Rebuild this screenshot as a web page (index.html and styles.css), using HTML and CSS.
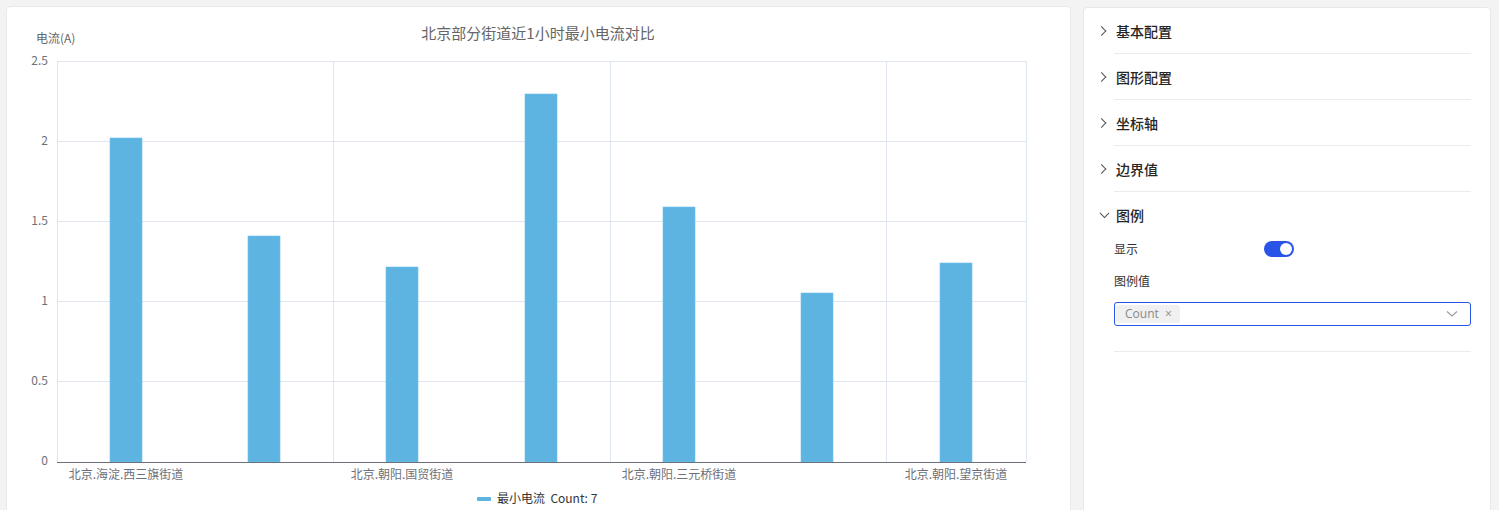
FILE: index.html
```html
<!DOCTYPE html>
<html lang="zh">
<head>
<meta charset="utf-8">
<link rel="stylesheet" href="styles.css">
</head>
<body>
<div class="page">
  <div class="card chart-card">
    <svg class="chart" width="1063" height="510" viewBox="0 0 1063 510" xmlns="http://www.w3.org/2000/svg">
      <text class="title" x="531" y="32" text-anchor="middle">北京部分街道近1小时最小电流对比</text>
      <text class="axis-name" x="29" y="36">电流(A)</text>
      <g class="grid">
        <line x1="50" y1="54.5" x2="1019" y2="54.5"/>
        <line x1="50" y1="134.5" x2="1019" y2="134.5"/>
        <line x1="50" y1="214.5" x2="1019" y2="214.5"/>
        <line x1="50" y1="294.5" x2="1019" y2="294.5"/>
        <line x1="50" y1="374.5" x2="1019" y2="374.5"/>
        <line x1="50.5" y1="54" x2="50.5" y2="455"/>
        <line x1="326.5" y1="54" x2="326.5" y2="455"/>
        <line x1="603.5" y1="54" x2="603.5" y2="455"/>
        <line x1="879.5" y1="54" x2="879.5" y2="455"/>
        <line x1="1019.5" y1="54" x2="1019.5" y2="455"/>
      </g>
      <g class="ticks" text-anchor="end">
        <text x="41" y="58">2.5</text>
        <text x="41" y="138">2</text>
        <text x="41" y="218">1.5</text>
        <text x="41" y="298">1</text>
        <text x="41" y="378">0.5</text>
        <text x="41" y="458">0</text>
      </g>
      <g class="bars">
        <rect x="103" y="131" width="32" height="324"/>
        <rect x="241" y="229" width="32" height="226"/>
        <rect x="379" y="260" width="32" height="195"/>
        <rect x="518" y="87" width="32" height="368"/>
        <rect x="656" y="200" width="32" height="255"/>
        <rect x="794" y="286" width="32" height="169"/>
        <rect x="933" y="256" width="32" height="199"/>
      </g>
      <line class="axis" x1="50" y1="455.5" x2="1019" y2="455.5"/>
      <g class="xlabels" text-anchor="middle">
        <text x="119" y="472">北京.海淀.西三旗街道</text>
        <text x="395" y="472">北京.朝阳.国贸街道</text>
        <text x="672" y="472">北京.朝阳.三元桥街道</text>
        <text x="949" y="472">北京.朝阳.望京街道</text>
      </g>
      <rect class="legend-mark" x="470" y="490" width="14" height="4" rx="1"/>
      <text class="legend" x="490" y="496">最小电流  Count: 7</text>
    </svg>
  </div>
  <div class="card panel">
    <div class="section">
      <div class="sec-head"><span class="chev right"></span><span class="sec-title">基本配置</span></div>
    </div>
    <div class="section">
      <div class="sec-head"><span class="chev right"></span><span class="sec-title">图形配置</span></div>
    </div>
    <div class="section">
      <div class="sec-head"><span class="chev right"></span><span class="sec-title">坐标轴</span></div>
    </div>
    <div class="section">
      <div class="sec-head"><span class="chev right"></span><span class="sec-title">边界值</span></div>
    </div>
    <div class="section open">
      <div class="sec-head"><span class="chev down"></span><span class="sec-title">图例</span></div>
      <div class="sec-body">
        <div class="field-row">
          <span class="label">显示</span>
          <span class="switch"><span class="knob"></span></span>
        </div>
        <div class="label block">图例值</div>
        <div class="select">
          <span class="tag">Count <span class="tag-x">×</span></span>
          <svg class="arrow" width="12" height="8" viewBox="0 0 12 8"><path d="M1 1.5 L6 6 L11 1.5" fill="none" stroke="#999" stroke-width="1.1"/></svg>
        </div>
      </div>
    </div>
  </div>
</div>
</body>
</html>
```

FILE: styles.css
```css
* { box-sizing: border-box; }
html, body { margin: 0; padding: 0; }
body {
  background: #f3f3f3;
  font-family: "Noto Sans CJK SC", "Noto Sans", sans-serif;
  width: 1499px;
  height: 510px;
  overflow: hidden;
}
.page {
  display: flex;
  gap: 13px;
  padding: 7px 8px 0 7px;
  height: 510px;
}
.card {
  background: #fff;
  border: 1px solid #e8e8e8;
  border-radius: 4px;
  height: 520px;
}
.chart-card {
  width: 1063px;
  flex: none;
  overflow: hidden;
  border: none;
  box-shadow: 0 0 0 1px #e9e9e9;
}
.chart { display: block; }
.chart text { font-family: "Noto Sans CJK SC", sans-serif; }
.title { font-size: 15px; fill: #666; }
.axis-name { font-size: 12px; fill: #666; }
.ticks text { font-size: 12px; fill: #6e7079; }
.xlabels text { font-size: 12px; fill: #6e7079; }
.grid line { stroke: #e0e6f1; stroke-width: 1; }
.axis { stroke: #6e7079; stroke-width: 1; }
.bars rect { fill: #5eb4e1; stroke: #6fc0ea; stroke-width: 0.6; }
.legend-mark { fill: #5eb4e1; }
.legend { font-size: 12px; fill: #333; white-space: pre; }

.panel {
  width: 408px;
  flex: none;
  padding: 0 19px 0 30px;
}
.section { border-bottom: 1px solid #ebebeb; }
.sec-head {
  height: 45px;
  display: flex;
  align-items: center;
  position: relative;
}
.sec-title {
  font-size: 14px;
  font-weight: 500;
  color: #262626;
  margin-left: 2px;
  line-height: 20px;
}
.chev {
  position: absolute;
  left: -14px;
  top: 50%;
  width: 7px;
  height: 7px;
  border-right: 1px solid #555;
  border-bottom: 1px solid #555;
}
.chev.right { transform: translate(0, -50%) rotate(-45deg); left: -16px; }
.chev.down { transform: translate(0, -75%) rotate(45deg); left: -13px; }
.sec-body { padding: 0 0 25px 0; }
.field-row {
  display: flex;
  align-items: center;
  height: 24px;
}
.label { font-size: 12px; color: #333; line-height: 16px; }
.field-row .label { width: 150px; }
.label.block { margin-top: 12px; }
.switch {
  width: 30px;
  height: 16px;
  border-radius: 8px;
  background: #2a54e8;
  position: relative;
  display: inline-block;
}
.knob {
  position: absolute;
  right: 2px;
  top: 2px;
  width: 12px;
  height: 12px;
  border-radius: 50%;
  background: #fff;
}
.select {
  margin-top: 13px;
  height: 24px;
  border: 1px solid #2a54e8;
  border-radius: 3px;
  display: flex;
  align-items: center;
  padding: 0 12px 0 1px;
  justify-content: space-between;
}
.tag {
  background: #f0f0f0;
  border-radius: 3px;
  height: 18px;
  line-height: 18px;
  padding: 0 8px 0 9px;
  font-family: "Open Sans", "Noto Sans", sans-serif;
  font-size: 12px;
  color: #888;
}
.tag-x { margin-left: 3px; font-size: 12px; color: #888; }
.arrow { display: block; }
```
